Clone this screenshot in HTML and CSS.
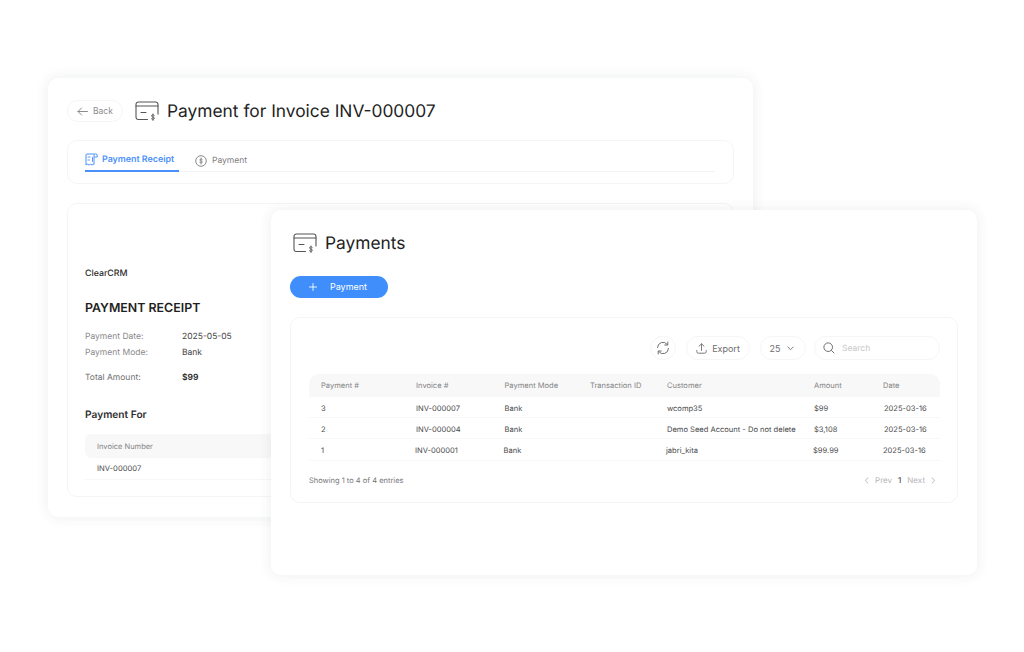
FILE: index.html
```html
<!DOCTYPE html>
<html lang="en">
<head>
<meta charset="utf-8">
<title>Payments</title>
<link rel="stylesheet" href="styles.css">
</head>
<body>
<svg class="defs" width="0" height="0" aria-hidden="true">
  <symbol id="card" viewBox="0 0 24 20">
    <path d="M12.500 18.500H3.500A2.500 2.500 0 0 1 1 16V3.500A2.500 2.500 0 0 1 3.500 1h17A2.500 2.500 0 0 1 23 3.500V13" fill="none" stroke="currentColor" stroke-width="1.100" stroke-linecap="round"/>
    <path d="M1 5h22M6 11.500h5" fill="none" stroke="currentColor" stroke-width="1.100" stroke-linecap="round"/>
    <path d="M19.300 14.300c-.5-.7-2.800-.8-2.800.6 0 1.500 2.900.8 2.900 2.300 0 1.400-2.400 1.300-3 .6M18 13v6.500" fill="none" stroke="currentColor" stroke-width=".9" stroke-linecap="round"/>
  </symbol>
</svg>

<section class="window window-back">
  <header class="page-head">
    <button class="pill back-btn">
      <svg class="ico" width="11" height="9" viewBox="0 0 11 9"><path d="M10.500 4.500H1M4.500 1 1 4.500 4.500 8" fill="none" stroke="currentColor" stroke-linecap="round" stroke-linejoin="round"/></svg>
      <span>Back</span>
    </button>
    <svg class="card-icon" width="24" height="20"><use href="#card"/></svg>
    <h1 class="title">Payment for Invoice INV-000007</h1>
  </header>

  <nav class="tabs-box">
    <div class="tabs">
      <div class="tab tab-active">
        <svg width="13" height="13" viewBox="0 0 13 13"><path d="M9.500 1H2a1 1 0 0 0-1 1v10l1.500-.8 1.500.8 1.500-.8 1.500.8 1.500-.8.5.3V2.500A1.500 1.500 0 0 1 11 1a1.200 1.200 0 0 1 1.200 1.200V4H9.500" fill="none" stroke="currentColor" stroke-linejoin="round"/><path d="M3 4h2M3 7h1.500M7.500 4.500v4" fill="none" stroke="currentColor" stroke-width=".9" stroke-linecap="round"/></svg>
        <span>Payment Receipt</span>
      </div>
      <div class="tab">
        <svg width="12" height="12" viewBox="0 0 12 12"><circle cx="6" cy="6" r="5.300" fill="none" stroke="currentColor" stroke-width=".9"/><path d="M7.400 4.500c-.4-.7-2.600-.8-2.600.5 0 1.300 2.600.7 2.600 2 0 1.200-2.300 1.100-2.800.4M6 3v6" fill="none" stroke="currentColor" stroke-width=".8" stroke-linecap="round"/></svg>
        <span>Payment</span>
      </div>
    </div>
  </nav>

  <article class="receipt">
    <div class="brand">ClearCRM</div>
    <h2 class="receipt-title">PAYMENT RECEIPT</h2>
    <dl class="facts">
      <div class="fact"><dt>Payment Date:</dt><dd>2025-05-05</dd></div>
      <div class="fact"><dt>Payment Mode:</dt><dd>Bank</dd></div>
      <div class="fact fact-total"><dt>Total Amount:</dt><dd>$99</dd></div>
    </dl>
    <h3 class="for-title">Payment For</h3>
    <div class="mini-head">Invoice Number</div>
    <div class="mini-row">INV-000007</div>
  </article>
</section>

<section class="window window-front">
  <header class="front-head">
    <svg class="card-icon" width="24" height="20"><use href="#card"/></svg>
    <h1 class="title">Payments</h1>
  </header>
  <button class="add-btn">
    <svg width="8" height="8" viewBox="0 0 9 9"><path d="M4.500 .5v8M.5 4.500h8" fill="none" stroke="currentColor" stroke-linecap="round"/></svg>
    <span>Payment</span>
  </button>

  <div class="panel">
    <div class="toolbar">
      <button class="pill tool-round">
        <svg width="14" height="14" viewBox="0 0 14 14"><path d="M1.500 6.500A5.500 5.500 0 0 1 11.300 3.400M12.500 7.500A5.500 5.500 0 0 1 2.700 10.600" fill="none" stroke="currentColor" stroke-linecap="round"/><path d="M11.800 1v3h-3M2.200 13v-3h3" fill="none" stroke="currentColor" stroke-linecap="round" stroke-linejoin="round"/></svg>
      </button>
      <button class="pill tool-export">
        <svg width="11" height="11" viewBox="0 0 11 11"><path d="M5.500 7.500V1M3 3.200 5.500 .8 8 3.200M.8 7.500v1.200A1.500 1.500 0 0 0 2.300 10.200h6.400a1.500 1.500 0 0 0 1.500-1.500V7.500" fill="none" stroke="currentColor" stroke-width=".9" stroke-linecap="round" stroke-linejoin="round"/></svg>
        <span>Export</span>
      </button>
      <button class="pill tool-size">
        <span>25</span>
        <svg width="7" height="5" viewBox="0 0 7 5"><path d="M.8 1 3.500 3.700 6.200 1" fill="none" stroke="currentColor" stroke-width=".9" stroke-linecap="round" stroke-linejoin="round"/></svg>
      </button>
      <div class="pill tool-search">
        <svg width="12" height="12" viewBox="0 0 12 12"><circle cx="5.200" cy="5.200" r="4.300" fill="none" stroke="currentColor"/><path d="M8.500 8.500 11 11" fill="none" stroke="currentColor" stroke-linecap="round"/></svg>
        <span>Search</span>
      </div>
    </div>

    <div class="table">
      <div class="row row-head">
        <span>Payment #</span><span>Invoice #</span><span>Payment Mode</span><span>Transaction ID</span><span>Customer</span><span>Amount</span><span>Date</span>
      </div>
      <div class="row">
        <span>3</span><span>INV-000007</span><span>Bank</span><span></span><span>wcomp35</span><span>$99</span><span class="date">2025-03-16</span>
      </div>
      <div class="row">
        <span>2</span><span>INV-000004</span><span>Bank</span><span></span><span>Demo Seed Account - Do not delete</span><span>$3,108</span><span class="date">2025-03-16</span>
      </div>
      <div class="row row-nudged">
        <span class="first">1</span><span>INV-000001</span><span>Bank</span><span></span><span>jabri_kita</span><span>$99.99</span><span class="date">2025-03-16</span>
      </div>
    </div>

    <footer class="foot">
      <span>Showing 1 to 4 of 4 entries</span>
      <div class="pager">
        <svg width="5" height="7" viewBox="0 0 5 7"><path d="M4 .8 1.200 3.500 4 6.200" fill="none" stroke="currentColor" stroke-width=".9" stroke-linecap="round" stroke-linejoin="round"/></svg>
        <span class="pg-link">Prev</span>
        <span class="pg-now">1</span>
        <span class="pg-link">Next</span>
        <svg width="5" height="7" viewBox="0 0 5 7"><path d="M1 .8 3.800 3.500 1 6.200" fill="none" stroke="currentColor" stroke-width=".9" stroke-linecap="round" stroke-linejoin="round"/></svg>
      </div>
    </footer>
  </div>
</section>
</body>
</html>
```
FILE: styles.css
```css
* { box-sizing: border-box; }

html, body {
  margin: 0;
  height: 100%;
}

body {
  position: relative;
  width: 1024px;
  height: 652px;
  overflow: hidden;
  background: #fff;
  font-family: Inter, "Liberation Sans", sans-serif;
  color: #2a2a2a;
  text-rendering: geometricPrecision;
}

.defs { position: absolute; }

h1, h2, h3, dl, dd { margin: 0; font: inherit; }

button {
  font: inherit;
  padding: 0;
  background: none;
  border: 0;
}

.window {
  position: absolute;
  background: #fff;
  border-radius: 10px;
  box-shadow: 0 0 14px rgba(40, 50, 70, .09);
}

.window-back {
  left: 48px;
  top: 78px;
  width: 705px;
  height: 439px;
  padding: 22px 19px 20px;
}

.window-front {
  left: 271px;
  top: 210px;
  width: 706px;
  height: 365px;
  padding: 22px 19px 0;
}

.pill {
  display: flex;
  align-items: center;
  border: 1px solid #f6f6f7;
  border-radius: 999px;
  color: #6e6e70;
  font-size: 9px;
}

.page-head {
  display: flex;
  align-items: center;
  height: 22px;
}

.back-btn {
  width: 56px;
  height: 22px;
  gap: 5px;
  padding-left: 9px;
  font-size: 8.500px;
  color: #8c8c8e;
}

.card-icon {
  flex: none;
  color: #555557;
}

.page-head .card-icon { margin-left: 12px; }

.title {
  margin-left: 8px;
  padding-top: 2px;
  font-size: 17.350px;
  line-height: 22px;
  font-weight: 400;
  color: #222;
}

.tabs-box {
  height: 44px;
  margin-top: 18px;
  padding: 0 18px 0 17px;
  border: 1px solid #f5f5f6;
  border-radius: 10px;
}

.tabs {
  display: flex;
  gap: 16px;
  height: 31px;
  border-bottom: 1px solid #f3f3f4;
}

.tab {
  display: flex;
  align-items: center;
  gap: 5px;
  height: 31px;
  padding-top: 8px;
  font-size: 8.500px;
  color: #7d7d80;
}

.tab-active {
  width: 94px;
  gap: 4px;
  padding-left: 0;
  font-size: 8.900px;
  color: #4a90fb;
  font-weight: 600;
  border-bottom: 2px solid #4a90fb;
}

.receipt {
  height: 294px;
  margin-top: 19px;
  padding: 64px 18px 0 17px;
  border: 1px solid #f5f5f6;
  border-radius: 10px;
}

.brand {
  font-size: 8.800px;
  line-height: 12px;
  font-weight: 500;
  color: #2c2c2e;
}

.receipt-title {
  margin-top: 20px;
  font-size: 12.400px;
  line-height: 16px;
  font-weight: 600;
  color: #1f1f21;
}

.facts {
  margin-top: 13px;
  font-size: 8.500px;
}

.fact {
  display: flex;
  height: 16px;
  align-items: center;
}

.fact dt {
  width: 97px;
  color: #8a8a8c;
}

.fact dd { color: #444; }

.fact-total {
  margin-top: 9px;
}

.fact-total dt { color: #6e6e70; }

.fact-total dd {
  font-weight: 600;
  color: #2a2a2a;
}

.for-title {
  margin-top: 22px;
  font-size: 10.200px;
  line-height: 14px;
  font-weight: 600;
  color: #2f2f31;
}

.mini-head {
  height: 24px;
  margin-top: 12px;
  padding-left: 12px;
  line-height: 25px;
  font-size: 7.500px;
  color: #858587;
  background: #f8f8f8;
  border-radius: 6px 0 0 6px;
}

.mini-row {
  height: 22px;
  padding-left: 12px;
  line-height: 22px;
  font-size: 7.600px;
  color: #4a4a4c;
  border-bottom: 1px solid #f7f7f8;
}

.front-head {
  display: flex;
  align-items: center;
  height: 22px;
  padding-left: 3px;
}

.add-btn {
  display: flex;
  align-items: center;
  justify-content: center;
  gap: 13px;
  width: 98px;
  height: 22px;
  margin-top: 22px;
  padding: 0 2px 1px 0;
  color: #fff;
  font-size: 9px;
  background: #3f8efc;
  border-radius: 999px;
}

.panel {
  height: 186px;
  margin-top: 19px;
  padding: 18px 17px 0 18px;
  border: 1px solid #f5f5f6;
  border-radius: 10px;
}

.toolbar {
  display: flex;
  justify-content: flex-end;
  gap: 10px;
  height: 24px;
  margin-bottom: 14px;
}

.toolbar .pill { height: 24px; }

.tool-round {
  justify-content: center;
  width: 26px;
}

.tool-export {
  justify-content: center;
  gap: 5px;
  width: 64px;
}

.tool-size {
  justify-content: center;
  gap: 7px;
  width: 46px;
  margin-right: -2px;
  padding-right: 2px;
}

.tool-search {
  gap: 7px;
  width: 126px;
  padding-left: 8px;
  font-size: 8.500px;
}

.tool-search span {
  margin-top: 1px;
  color: #c8c8ca;
}

.table { font-size: 7.550px; }

.row {
  display: grid;
  grid-template-columns: 95px 88.500px 85.500px 77px 147px 69px 1fr;
  align-items: center;
  height: 21px;
  padding: 2px 0 0 12px;
  color: #4a4a4c;
  border-bottom: 1px solid #f7f7f8;
}

.row-head {
  height: 23px;
  padding-top: 0;
  color: #858587;
  background: #f8f8f8;
  border: 0;
  border-radius: 10px 10px 0 0;
}

.row-nudged {
  height: 22px;
  padding-left: 11px;
}

.row-nudged .first { padding-left: 1px; }

.date { padding-left: 1px; }

.foot {
  display: flex;
  justify-content: space-between;
  align-items: center;
  height: 12px;
  margin-top: 13px;
  padding-right: 4px;
  font-size: 7.500px;
  color: #77777a;
}

.pager {
  display: flex;
  align-items: center;
  gap: 6px;
  font-size: 8px;
  color: #b4b4b6;
}

.pg-now {
  color: #4a4a4c;
  font-weight: 500;
}
```
